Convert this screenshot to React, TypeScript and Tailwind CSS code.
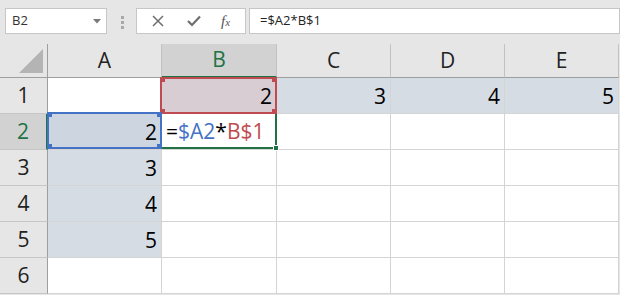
import React from 'react';

const columns = [
  { label: 'A', width: 'w-[114px]' },
  { label: 'B', width: 'w-[115px]' },
  { label: 'C', width: 'w-[114px]' },
  { label: 'D', width: 'w-[114px]' },
  { label: 'E', width: 'w-[114px]' },
];

type Cell = { value?: string; fill?: string };

const rows: Cell[][] = [
  [{}, { value: '2', fill: 'bg-[#d7cdd2]' }, { value: '3', fill: 'bg-[#d6dce4]' }, { value: '4', fill: 'bg-[#d6dce4]' }, { value: '5', fill: 'bg-[#d6dce4]' }],
  [{ value: '2', fill: 'bg-[#cdd5e1]' }, {}, {}, {}, {}],
  [{ value: '3', fill: 'bg-[#d6dce4]' }, {}, {}, {}, {}],
  [{ value: '4', fill: 'bg-[#d6dce4]' }, {}, {}, {}, {}],
  [{ value: '5', fill: 'bg-[#d6dce4]' }, {}, {}, {}, {}],
  [{}, {}, {}, {}, {}],
];

const CornerDots = ({ color }: { color: string }) => (
  <>
    <span className={`absolute -left-[2px] -top-[2px] w-[5px] h-[5px] ${color}`} />
    <span className={`absolute -right-[2px] -top-[2px] w-[5px] h-[5px] ${color}`} />
    <span className={`absolute -left-[2px] -bottom-[2px] w-[5px] h-[5px] ${color}`} />
    <span className={`absolute -right-[2px] -bottom-[2px] w-[5px] h-[5px] ${color}`} />
  </>
);

const Toolbar = () => (
  <div className="flex items-start h-[44px] pt-[8px] pl-[5px]">
    <div className="relative flex items-center w-[102px] h-[26px] bg-white border border-[#c6c6c6] pl-[6px] text-[13px] text-[#333]">
      B2
      <svg className="absolute left-[87px] top-[10px]" width="8" height="5" viewBox="0 0 8 5">
        <path d="M0 0 H8 L4 4.5 Z" fill="#7a7a7a" />
      </svg>
    </div>
    <div className="flex flex-col gap-[2px] ml-[14px] mt-[8px]">
      <span className="w-[3px] h-[3px] bg-[#a8a8a8]" />
      <span className="w-[3px] h-[3px] bg-[#a8a8a8]" />
      <span className="w-[3px] h-[3px] bg-[#a8a8a8]" />
    </div>
    <div className="flex items-center ml-[12px] w-[110px] h-[26px] bg-white border border-[#c6c6c6]">
      <svg className="ml-[15px]" width="12" height="12" viewBox="0 0 12 12">
        <path d="M1 1 L11 11 M11 1 L1 11" stroke="#6e6e6e" strokeWidth="1.5" />
      </svg>
      <svg className="ml-[23px]" width="14" height="12" viewBox="0 0 14 12">
        <path d="M1 6 L5 10 L13 1.5" stroke="#6e6e6e" strokeWidth="2.2" fill="none" />
      </svg>
      <span className="ml-[20px] text-[15px] italic text-[#555] font-['Liberation_Serif',serif] leading-none">
        f<span className="text-[11px]">x</span>
      </span>
    </div>
    <div className="flex items-center flex-1 ml-[3px] h-[26px] bg-white border border-[#c6c6c6] pl-[10px] text-[13px] text-[#222]">
      =$A2*B$1
    </div>
  </div>
);

export default function App() {
  return (
    <div className="w-[620px] h-[295px] overflow-hidden bg-[#e6e6e6] font-['Open_Sans',sans-serif]">
      <Toolbar />
      <div className="relative">
        <div className="flex h-[34px]">
          <div className="relative w-[48px] border-r border-b border-[#9e9e9e]">
            <svg className="absolute left-[18px] top-[4px]" width="26" height="26" viewBox="0 0 26 26">
              <path d="M1 25 L25 25 L25 1 Z" fill="#b4b4b4" />
            </svg>
          </div>
          {columns.map((c) => {
            const selected = c.label === 'B';
            return (
              <div
                key={c.label}
                className={`${c.width} flex items-center justify-center text-[21px] border-r border-r-[#c2c2c2] ${
                  selected
                    ? 'bg-[#d2d2d2] text-[#217346] border-b-2 border-b-[#217346]'
                    : 'text-[#222] border-b border-b-[#9e9e9e]'
                }`}
              >
                {c.label}
              </div>
            );
          })}
        </div>
        {rows.map((row, ri) => {
          const selected = ri === 1;
          return (
            <div key={ri} className="flex h-[36px]">
              <div
                className={`w-[48px] flex items-center justify-center text-[21px] border-b border-b-[#c6c6c6] ${
                  selected
                    ? 'bg-[#d2d2d2] text-[#217346] border-r-2 border-r-[#217346]'
                    : 'text-[#222] border-r border-r-[#9e9e9e]'
                }`}
              >
                {ri + 1}
              </div>
              {row.map((cell, ci) => (
                <div
                  key={ci}
                  className={`${columns[ci].width} flex items-center justify-end pr-[4px] pt-[3px] text-[21px] text-black border-r border-b border-[#d4d4d4] ${
                    cell.fill ?? 'bg-white'
                  }`}
                >
                  {cell.value}
                </div>
              ))}
            </div>
          );
        })}

        {/* B2 active cell with formula */}
        <div className="absolute left-[160px] top-[68px] w-[117px] h-[37px] border-2 border-[#217346] flex items-center pl-[4px] pt-[3px] text-[21px] bg-white">
          <span className="text-black">=</span>
          <span className="text-[#4472c4]">$A2</span>
          <span className="text-black">*</span>
          <span className="text-[#bf4b50]">B$1</span>
          <span className="absolute -right-[4px] -bottom-[4px] w-[6px] h-[6px] bg-[#217346] border border-white" />
        </div>

        {/* B1 reference */}
        <div className="absolute left-[160px] top-[33px] w-[117px] h-[37px] border-2 border-[#bf4b50]">
          <CornerDots color="bg-[#bf4b50]" />
        </div>

        {/* A2 reference */}
        <div className="absolute left-[47px] top-[68px] w-[115px] h-[37px] border-2 border-[#4472c4]">
          <CornerDots color="bg-[#4472c4]" />
        </div>
      </div>
    </div>
  );
}
